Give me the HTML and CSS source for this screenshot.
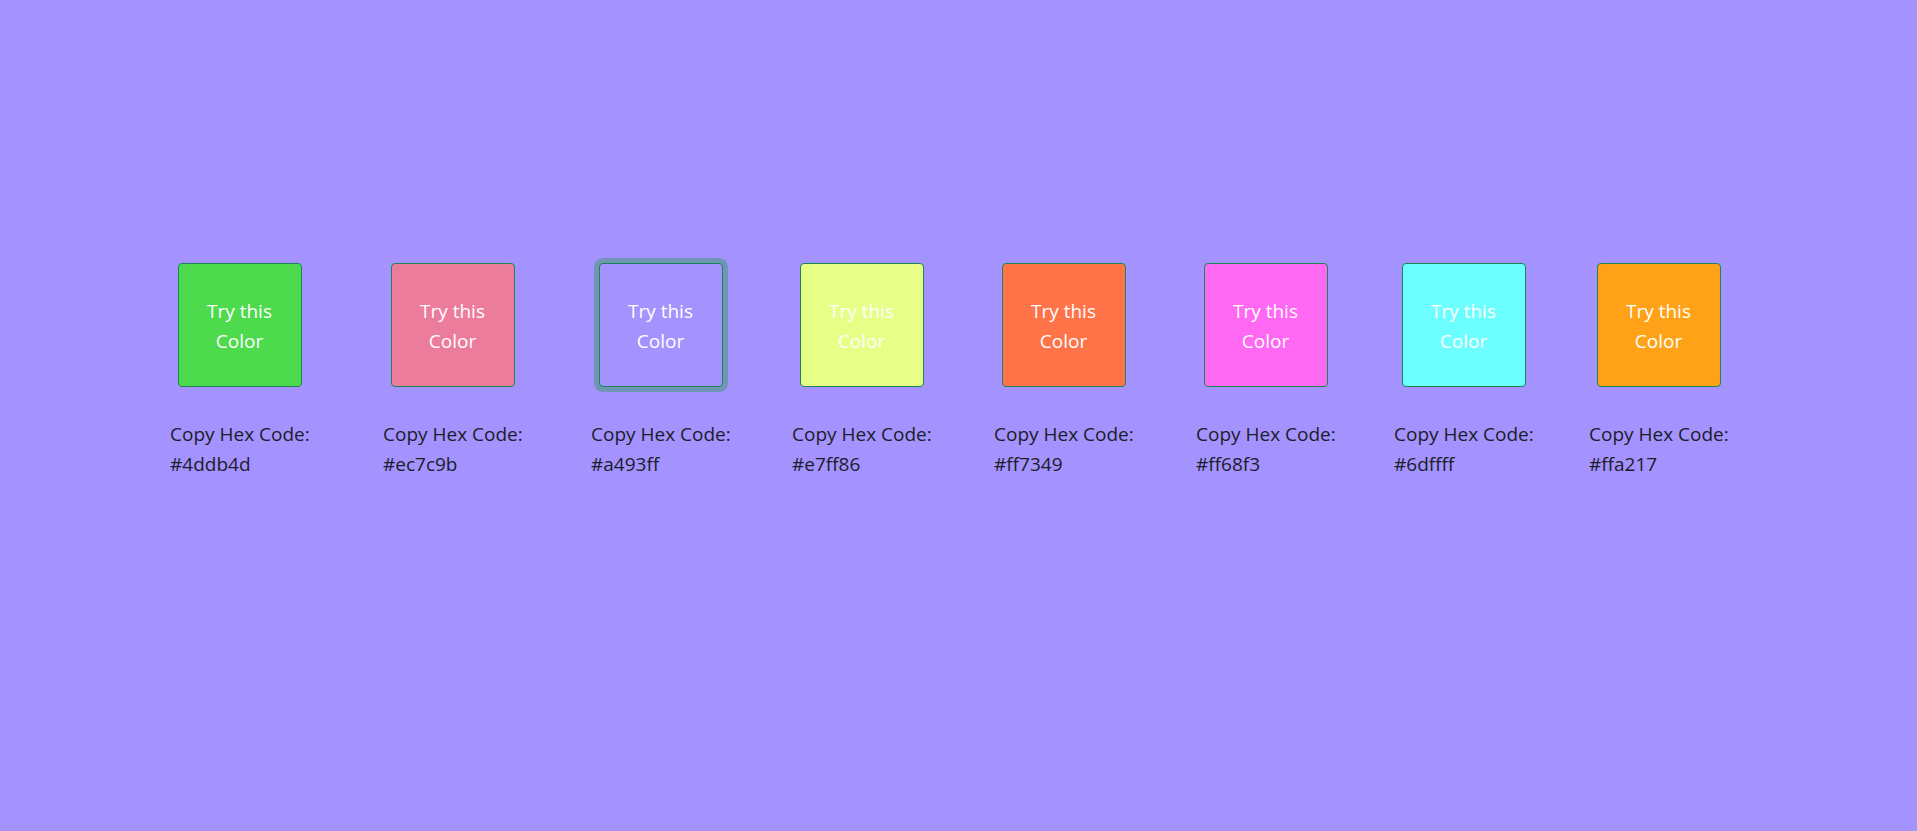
FILE: index.html
```html
<!DOCTYPE html>
<html lang="en">
<head>
<meta charset="utf-8">
<title>Try this Color</title>
<link rel="stylesheet" href="styles.css">
</head>
<body>
<main class="palette">
  <div class="swatch s1">
    <button class="try c-4ddb4d">Try this Color</button>
    <p class="hex">Copy Hex Code: #4ddb4d</p>
  </div>
  <div class="swatch s2">
    <button class="try c-ec7c9b">Try this Color</button>
    <p class="hex">Copy Hex Code: #ec7c9b</p>
  </div>
  <div class="swatch s3">
    <button class="try c-a493ff focused">Try this Color</button>
    <p class="hex">Copy Hex Code: #a493ff</p>
  </div>
  <div class="swatch s4">
    <button class="try c-e7ff86">Try this Color</button>
    <p class="hex">Copy Hex Code: #e7ff86</p>
  </div>
  <div class="swatch s5">
    <button class="try c-ff7349">Try this Color</button>
    <p class="hex">Copy Hex Code: #ff7349</p>
  </div>
  <div class="swatch s6">
    <button class="try c-ff68f3">Try this Color</button>
    <p class="hex">Copy Hex Code: #ff68f3</p>
  </div>
  <div class="swatch s7">
    <button class="try c-6dffff">Try this Color</button>
    <p class="hex">Copy Hex Code: #6dffff</p>
  </div>
  <div class="swatch s8">
    <button class="try c-ffa217">Try this Color</button>
    <p class="hex">Copy Hex Code: #ffa217</p>
  </div>
</main>
</body>
</html>
```

FILE: styles.css
```css
html, body {
  margin: 0;
  padding: 0;
}

body {
  background: #a493ff;
  color: #1b1d2a;
  font-family: "Open Sans", "Noto Sans", sans-serif;
  font-size: 19px;
  line-height: 30px;
  min-height: 831px;
}

.palette {
  display: flex;
  align-items: flex-start;
  padding-top: 263px;
  padding-left: 170px;
}

.swatch {
  display: flex;
  flex-direction: column;
  align-items: flex-start;
  flex: 0 0 auto;
}

.s1 { width: 213px; }
.s2 { width: 208px; }
.s3 { width: 201px; }
.s4 { width: 202px; }
.s5 { width: 202px; }
.s6 { width: 198px; }
.s7 { width: 195px; }
.s8 { width: 150px; }

.try {
  box-sizing: border-box;
  width: 124px;
  height: 124px;
  margin: 0 0 0 7.5px;
  padding: 2px 12px 0;
  border: 1px solid #198754;
  border-radius: 4px;
  color: #ffffff;
  font-family: inherit;
  font-size: 19px;
  line-height: 30px;
  text-align: center;
  cursor: pointer;
}

.focused {
  box-shadow: 0 0 0 5px rgba(60, 153, 110, 0.5);
}

.c-4ddb4d { background: #4ddb4d; }
.c-ec7c9b { background: #ec7c9b; }
.c-a493ff { background: #a493ff; }
.c-e7ff86 { background: #e7ff86; }
.c-ff7349 { background: #ff7349; }
.c-ff68f3 { background: #ff68f3; }
.c-6dffff { background: #6dffff; }
.c-ffa217 { background: #ffa217; }

.hex {
  margin: 32px 0 0 0;
  width: 142px;
}
```
